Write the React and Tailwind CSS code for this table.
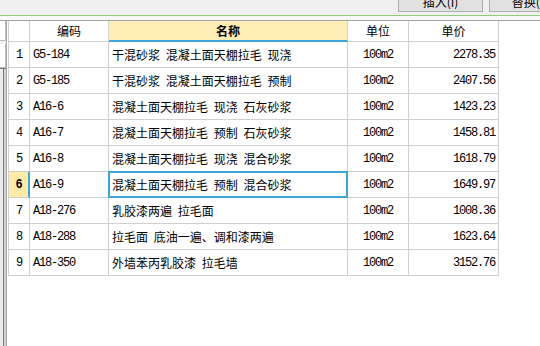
const rows = [
  { code: 'G5-184', name: '干混砂浆 混凝土面天棚拉毛 现浇', unit: '100m2', price: '2278.35' },
  { code: 'G5-185', name: '干混砂浆 混凝土面天棚拉毛 预制', unit: '100m2', price: '2407.56' },
  { code: 'A16-6', name: '混凝土面天棚拉毛 现浇 石灰砂浆', unit: '100m2', price: '1423.23' },
  { code: 'A16-7', name: '混凝土面天棚拉毛 预制 石灰砂浆', unit: '100m2', price: '1458.81' },
  { code: 'A16-8', name: '混凝土面天棚拉毛 现浇 混合砂浆', unit: '100m2', price: '1618.79' },
  { code: 'A16-9', name: '混凝土面天棚拉毛 预制 混合砂浆', unit: '100m2', price: '1649.97' },
  { code: 'A18-276', name: '乳胶漆两遍 拉毛面', unit: '100m2', price: '1008.36' },
  { code: 'A18-288', name: '拉毛面 底油一遍、调和漆两遍', unit: '100m2', price: '1623.64' },
  { code: 'A18-350', name: '外墙苯丙乳胶漆 拉毛墙', unit: '100m2', price: '3152.76' },
]

const cjk = "font-['Noto_Sans_CJK_SC',sans-serif]"
const mono = "font-['Liberation_Mono','Noto_Sans_CJK_SC',monospace] text-[12px] tracking-[-1.2px]"

const App = () => {
  const selected = 5

  return (
    <div className={`w-[540px] h-[346px] overflow-hidden bg-[#f0f0f0] flex flex-col text-black ${cjk}`}>
      {/* toolbar, mostly scrolled out of view */}
      <div className="h-[15px] flex gap-[6px] pl-[398px] shrink-0">
        <button className="shrink-0 w-[85px] h-[23px] -mt-[11px] bg-[#e1e1e1] border border-[#adadad] text-[12px] leading-none pt-[2px]">
          插入(I)
        </button>
        <button className="shrink-0 w-[85px] h-[23px] -mt-[11px] bg-[#e1e1e1] border border-[#adadad] text-[12px] leading-none pt-[2px]">
          替换(R)
        </button>
      </div>
      <div className="h-px bg-[#93c97c] shrink-0" />
      <div className="h-[4px] bg-[#f8f8f8] shrink-0" />

      <div className="flex flex-1 border-t border-[#a3a3a3]">
        {/* left side strip */}
        <div className="w-[6px] flex flex-col">
          <div className="h-[20px] bg-white border-r border-b border-[#bcbcbc]" />
          <div className="h-[3px]" />
          <div className="h-[24px] bg-white border-r border-b border-[#bcbcbc]" />
          <div className="flex-1 flex border-t border-[#7d7d7d]">
            <div className="w-[3px] bg-[#ececec]" />
            <div className="w-px bg-[#7c7c7c]" />
            <div className="flex-1 bg-[#d2d2d2]" />
          </div>
        </div>
        <div className="w-px bg-[#a6a6a6]" />
        <div className="w-px bg-white" />

        {/* grid */}
        <div className="flex-1 bg-white">
          <div className="w-[491px] border-l border-[#d0d0d0]">
            <div className="flex h-[21px] text-[12px]">
              <div className="w-[21px] border-r border-b border-[#d0d0d0]" />
              <div className="w-[79px] border-r border-b border-[#d0d0d0] flex items-center justify-center">编码</div>
              <div className="w-[239px] border-r border-[#d0d0d0] border-b-2 border-b-[#3ea7d8] bg-[#ffefb6] flex items-center justify-center font-bold">
                名称
              </div>
              <div className="w-[61px] border-r border-b border-[#d0d0d0] flex items-center justify-center">单位</div>
              <div className="w-[90px] border-r border-b border-[#d0d0d0] flex items-center justify-center">单价</div>
            </div>

            {rows.map((r, i) => {
              const sel = i === selected
              return (
                <div key={r.code} className="flex h-[26px]">
                  <div
                    className={`w-[21px] border-b border-[#d0d0d0] flex items-center justify-center ${mono} ${
                      sel ? 'bg-[#ffeaa8] font-bold border-r-2 border-r-[#3ea7d8]' : 'border-r'
                    }`}
                  >
                    {i + 1}
                  </div>
                  <div className={`w-[79px] border-r border-b border-[#d0d0d0] flex items-center pl-[3px] ${mono}`}>
                    {r.code}
                  </div>
                  <div className="relative w-[239px] border-r border-b border-[#d0d0d0] flex items-center pl-[3px] text-[12px] [word-spacing:3px]">
                    {r.name}
                    {sel && (
                      <div className="absolute -top-px -left-px -right-px -bottom-px border-2 border-[#3ea7d8]" />
                    )}
                  </div>
                  <div className={`w-[61px] border-r border-b border-[#d0d0d0] flex items-center justify-center ${mono}`}>
                    {r.unit}
                  </div>
                  <div className={`w-[90px] border-r border-b border-[#d0d0d0] flex items-center justify-end pr-[3px] ${mono}`}>
                    {r.price}
                  </div>
                </div>
              )
            })}
          </div>
        </div>
      </div>
    </div>
  )
}

export default App
